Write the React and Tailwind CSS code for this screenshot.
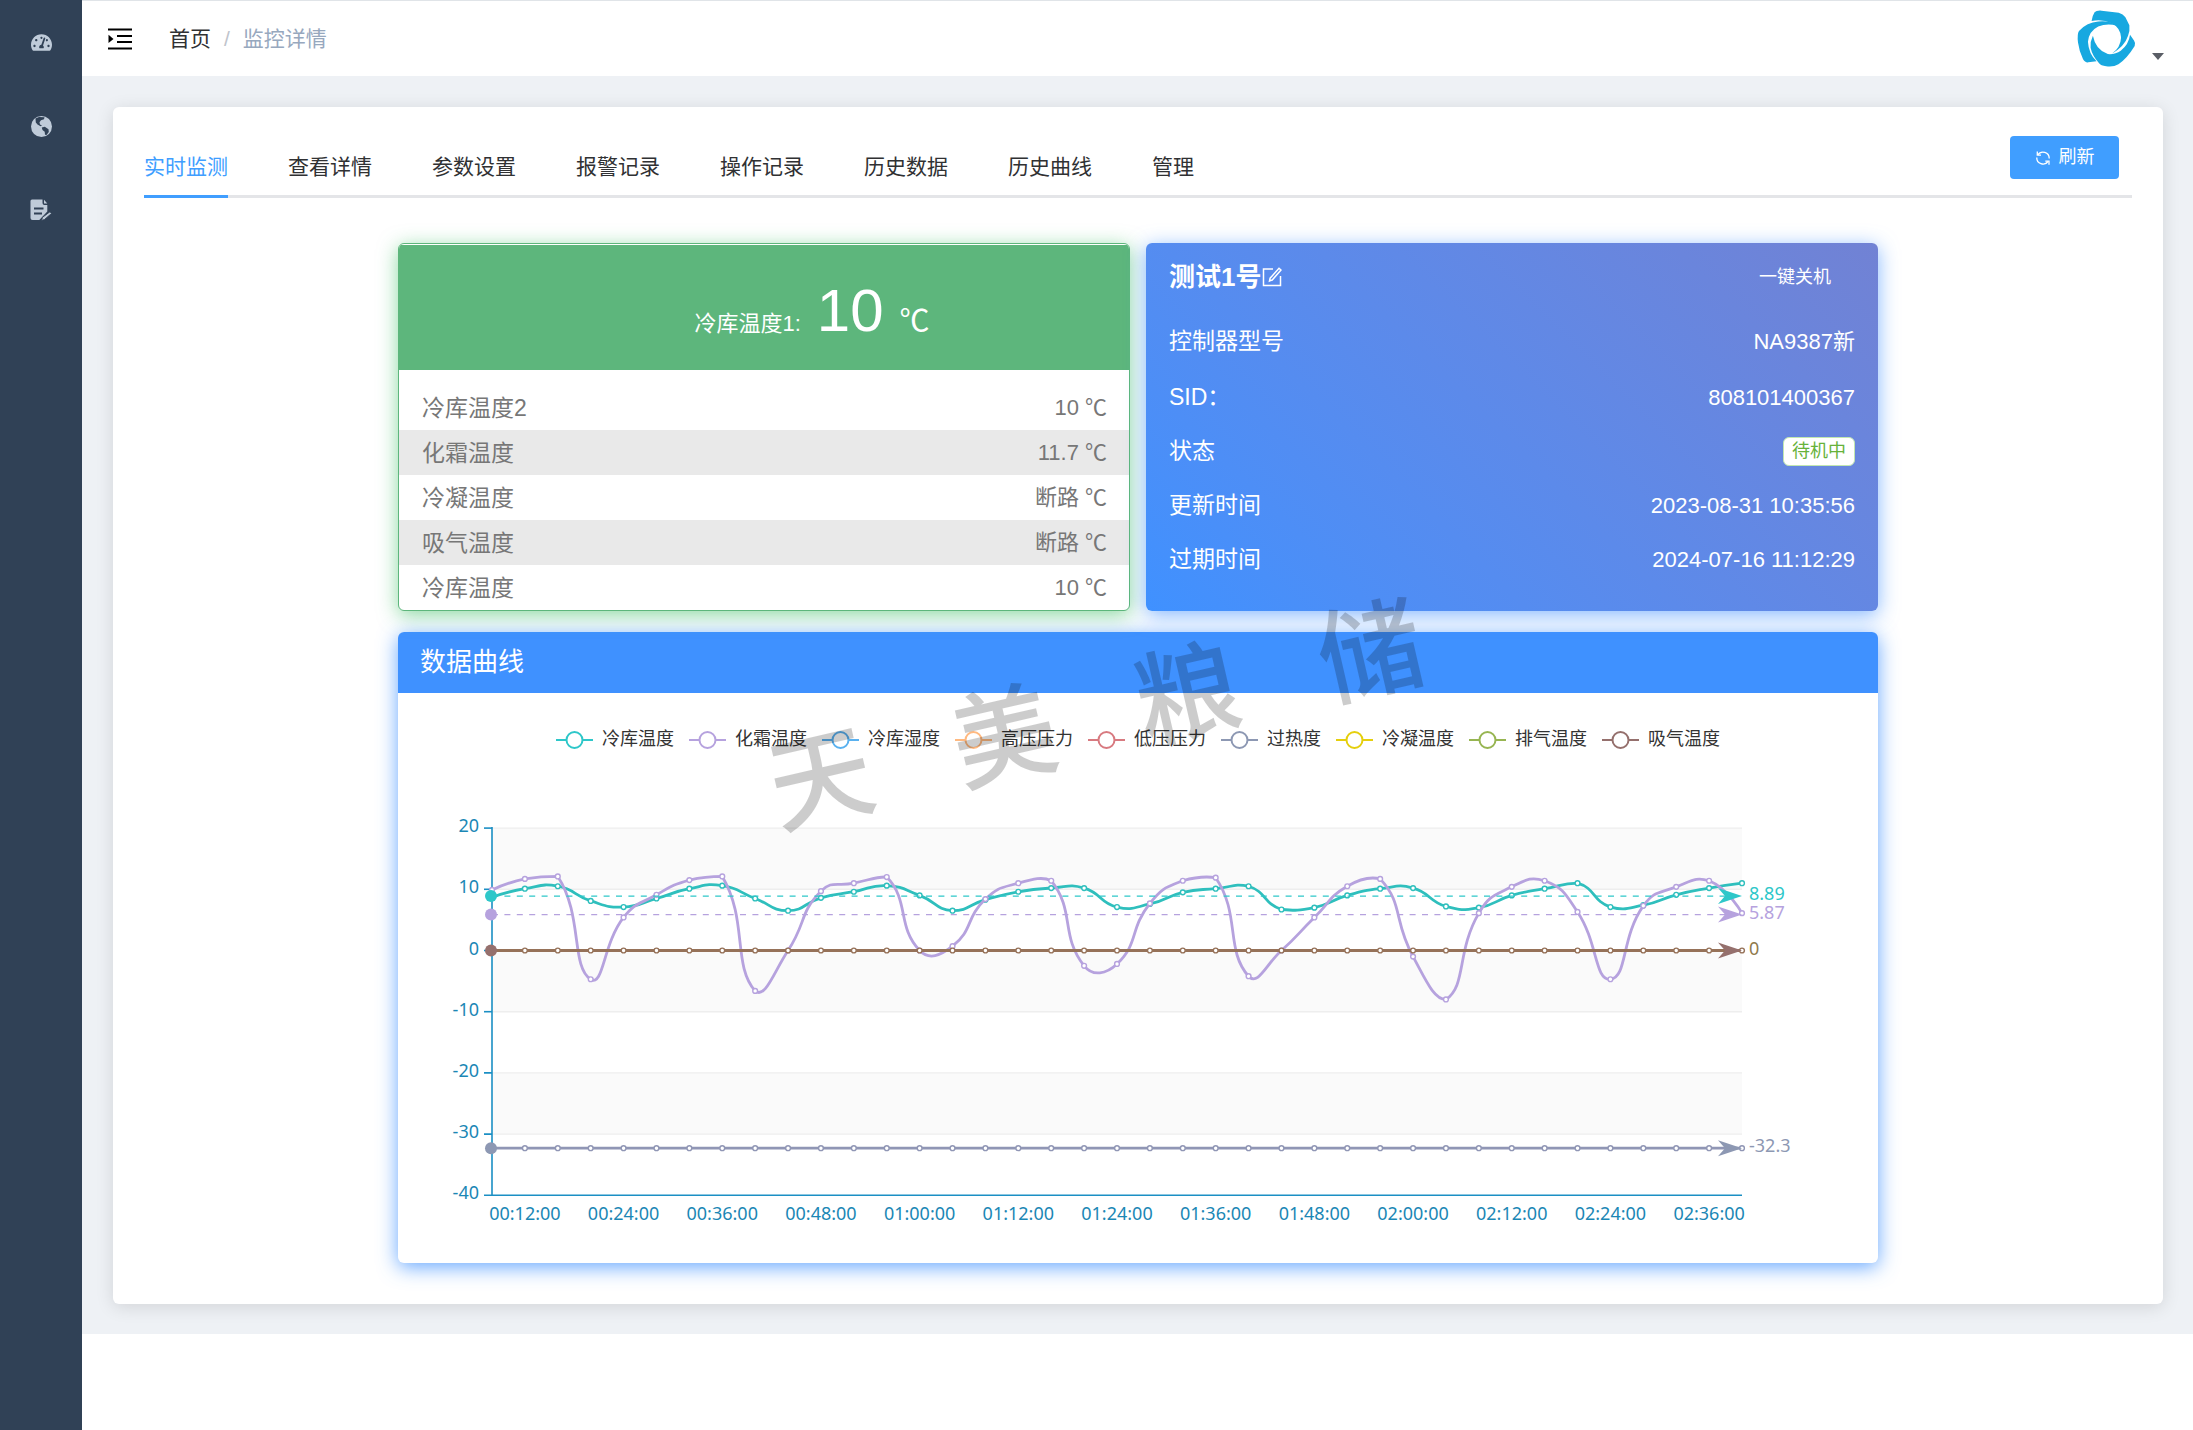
import { FaTachometerAlt } from 'react-icons/fa';

const tabs = ['实时监测', '查看详情', '参数设置', '报警记录', '操作记录', '历史数据', '历史曲线', '管理'];

const temperatures = [
  { name: '冷库温度2', value: '10 ℃' },
  { name: '化霜温度', value: '11.7 ℃' },
  { name: '冷凝温度', value: '断路 ℃' },
  { name: '吸气温度', value: '断路 ℃' },
  { name: '冷库温度', value: '10 ℃' },
];

const legend = [
  { name: '冷库温度', color: '#2ec7c9' },
  { name: '化霜温度', color: '#b6a2de' },
  { name: '冷库湿度', color: '#5ab1ef' },
  { name: '高压压力', color: '#ffb980' },
  { name: '低压压力', color: '#d87a80' },
  { name: '过热度', color: '#8d98b3' },
  { name: '冷凝温度', color: '#e5cf0d' },
  { name: '排气温度', color: '#97b552' },
  { name: '吸气温度', color: '#95706d' },
];

const roomTemp = [
  8.7, 10.1, 10.5, 8.1, 7.1, 8.5, 10.1, 10.6, 8.5, 6.5, 8.6, 9.6, 10.6, 9, 6.5, 8.3, 9.6, 10.2, 10.2, 7.1,
  7.6, 9.5, 10.1, 10.5, 6.7, 7, 9, 10.1, 10.2, 7.2, 7, 9, 10.1, 11, 7.1, 7.4, 9.1, 10.2, 11,
];
const frostTemp = [
  9.9, 11.7, 12.1, -4.7, 5.4, 9.1, 11.5, 12.1, -6.6, 0, 9.7, 11, 12, 0, 0.7, 8.4, 11, 11.4, -2.5, -2.2,
  7.7, 11.4, 11.9, -4.2, 0, 5.4, 10.5, 11.7, -1, -8, 6.1, 10.4, 11.4, 6.3, -4.7, 7.3, 10.4, 11.4, 6.1,
];

const LEFT = 94;
const RIGHT = 1344;
const COUNT = 39;
const px = (i) => LEFT + ((RIGHT - LEFT) * i) / (COUNT - 1);
const py = (v) => 197.5 - v * 6.12;

const timeLabels = Array.from({ length: 13 }, (_, i) => {
  const minutes = 12 * (i + 1);
  const hh = String(Math.floor(minutes / 60)).padStart(2, '0');
  const mm = String(minutes % 60).padStart(2, '0');
  return { text: `${hh}:${mm}:00`, x: px(1 + i * 3) };
});

// cubic curve through every point, handles are kept inside the range of the data
function smoothPath(values) {
  const pts = values.map((v, i) => [px(i), py(v)]);
  const ys = pts.map((p) => p[1]);
  const top = Math.min(...ys);
  const bottom = Math.max(...ys);
  const clamp = (y) => Math.min(bottom, Math.max(top, y));
  let d = `M${pts[0][0]},${pts[0][1]}`;
  let out = pts[0];
  for (let i = 1; i < pts.length; i++) {
    const p = pts[i];
    const prev = pts[i - 1];
    const next = pts[i + 1];
    let inn = p;
    let nextOut = p;
    if (next) {
      const a = Math.hypot(p[0] - prev[0], p[1] - prev[1]);
      const b = Math.hypot(next[0] - p[0], next[1] - p[1]);
      const r = b / (a + b);
      const vx = (next[0] - prev[0]) * 0.5;
      const vy = (next[1] - prev[1]) * 0.5;
      inn = [p[0] - vx * (1 - r), clamp(p[1] - vy * (1 - r))];
      nextOut = [p[0] + vx * r, clamp(p[1] + vy * r)];
    }
    d += `C${out[0]},${out[1]} ${inn[0]},${inn[1]} ${p[0]},${p[1]}`;
    out = nextOut;
  }
  return d;
}

const GlobeIcon = () => (
  <svg viewBox="0 0 21 21" className="size-[21px]" aria-hidden="true">
    <circle cx="10.5" cy="10.5" r="10.5" fill="#bfcbd9" />
    <path d="M4.5 2.5 8 1l5.500 .3-.5 2-3 1-1.500 2 .5 2.200 2 1-1.500 .8L6.500 8.500 4.800 6.500z" fill="#304156" />
    <path d="M10.800 11.500l3-.8 3.700 2.600.3 2.700-2.300 3-1.500-.3-.3-3-2.200-1.700z" fill="#304156" />
  </svg>
);

const FileEditIcon = () => (
  <svg viewBox="0 0 22 22" className="size-[22px]" aria-hidden="true">
    <path
      d="M2 .5h10.500V4a2 2 0 0 0 2 2h2.800v6.500l-8 8.500H2.500a2 2 0 0 1-2-2V2A1.500 1.500 0 0 1 2 .5zM14 .8l3.300 3.700H14z"
      fill="#bfcbd9"
    />
    <path d="M4 9.500h9.500M4 14.500h8" stroke="#304156" strokeWidth="1.8" />
    <path d="M11.500 21.500l1-3.200 7.500-5.600 1.500 1.800-7 6z" fill="#bfcbd9" stroke="#304156" strokeWidth=".9" />
  </svg>
);

const FoldIcon = () => (
  <svg viewBox="0 0 24 22" className="h-[22px] w-6" aria-hidden="true">
    <path d="M0 1.500h24M9 8h15M9 14h15M0 20.500h24" stroke="#000" strokeWidth="2" />
    <path d="M.5 6.800 5.500 11 .5 15z" fill="#000" />
  </svg>
);

const Logo = () => (
  <svg viewBox="382 28 178 176" className="size-[59px]" aria-hidden="true">
    <g fill="#17a8e0">
      <path d="M426 63Q429 46 435 37Q440 31 456 32L508 38Q521 41 528 52L540 76Q542 92 536 108Q526 140 487 162Q514 143 515 113Q513 83 486 70Q460 57 426 63Z" />
      <path d="M502 77Q480 61 446 65Q412 68 388 93Q382 102 385 128Q389 156 400 178Q406 189 416 188L441 185Q417 162 415 126Q418 94 446 80Q472 69 502 77Z" />
      <path d="M430 108Q421 126 423 144Q428 168 448 190Q454 198 470 200Q492 203 507 194Q532 178 556 139Q560 131 554 122L542 105Q538 135 514 153Q497 165 475 163Q438 151 430 108Z" />
    </g>
  </svg>
);

const RefreshIcon = () => (
  <svg viewBox="0 0 16 16" className="size-4" fill="none" stroke="#fff" strokeWidth="1.3" aria-hidden="true">
    <path d="M2.800 5A6.200 6.200 0 0 1 14.200 8.500M1.800 7.500A6.200 6.200 0 0 0 13 11.500" />
    <path d="M2.300 1.500V5.200H6M14 14.800V11.200H10.300" />
  </svg>
);

const EditIcon = () => (
  <svg viewBox="0 0 20 20" className="size-5" fill="none" stroke="#fff" strokeWidth="1.5" aria-hidden="true">
    <path d="M11 2H1.500v16.500h17V9" />
    <path d="M17 1.200l2 1.800-8.800 10-2.700 1 .6-2.800z" />
  </svg>
);

const Average = ({ y, color, label, dashed, labelColor }) => (
  <g>
    {dashed && <path d={`M${LEFT},${y}H${RIGHT - 12}`} stroke={color} strokeWidth="1.4" strokeDasharray="6 6.400" />}
    <circle cx={LEFT - 1} cy={y} r="6" fill={color} />
    <path d={`M${RIGHT - 24},${y - 8}L${RIGHT},${y}L${RIGHT - 24},${y + 8}L${RIGHT - 17},${y}Z`} fill={color} />
    <text x={RIGHT + 7} y={y + 4} fill={labelColor || color}>
      {label}
    </text>
  </g>
);

const Series = ({ values, color }) => (
  <g stroke={color}>
    <path d={smoothPath(values)} fill="none" strokeWidth="2.8" />
    {values.map((v, i) => (
      <circle key={i} cx={px(i)} cy={py(v)} r="2.4" fill="#fff" strokeWidth="1.4" />
    ))}
  </g>
);

const Chart = () => (
  <svg viewBox="0 0 1480 510" className="block w-full font-['Noto_Sans',sans-serif] text-[18px]" role="img" aria-label="数据曲线">
    {[20, 0, -20].map((v) => (
      <rect key={v} x={LEFT} y={py(v)} width={RIGHT - LEFT} height="61" fill="#fafafa" />
    ))}
    {[20, 10, -10, -20, -30].map((v) => (
      <path key={v} d={`M${LEFT},${py(v)}H${RIGHT}`} stroke="#eee" strokeWidth="1.4" />
    ))}
    <g stroke="#1b8fc4" strokeWidth="1.6">
      <path d={`M${LEFT},${py(20) - 1}V${py(-40)}H${RIGHT}`} fill="none" />
      {[20, 10, 0, -10, -20, -30, -40].map((v) => (
        <path key={v} d={`M${LEFT - 8},${py(v)}H${LEFT}`} />
      ))}
    </g>
    <g fill="#1b87b5" textAnchor="end">
      {[20, 10, 0, -10, -20, -30, -40].map((v) => (
        <text key={v} x={LEFT - 13} y={py(v) + 4}>
          {v}
        </text>
      ))}
    </g>
    <g fill="#1b87b5" textAnchor="middle">
      {timeLabels.map((t) => (
        <text key={t.text} x={t.x} y="467">
          {t.text}
        </text>
      ))}
    </g>
    <Series values={roomTemp} color="#2fbfbd" />
    <Series values={frostTemp} color="#b6a2de" />
    <Series values={Array(COUNT).fill(0)} color="#967259" />
    <Series values={Array(COUNT).fill(-32.3)} color="#9096b5" />
    <Average y={py(8.89)} color="#2ec7c9" label="8.89" dashed />
    <Average y={py(5.87)} color="#b6a2de" label="5.87" dashed />
    <Average y={py(0)} color="#95706d" label="0" labelColor="#8f7a4c" />
    <Average y={py(-32.3)} color="#8d98b3" label="-32.3" />
  </svg>
);

const InfoRow = ({ label, children }) => (
  <div className="flex h-[54px] items-center justify-between first:h-[58px]">
    <dt className="text-[23px]">{label}</dt>
    <dd className="text-[22px]">{children}</dd>
  </div>
);

const App = () => {
  return (
    <div className="flex min-h-screen bg-white font-['Liberation_Sans','Noto_Sans_CJK_SC',sans-serif] text-[#303133]">
      <aside className="w-[82px] shrink-0 bg-[#304156]">
        <nav className="flex flex-col items-center text-[#bfcbd9]">
          <a href="#dashboard" aria-label="首页" className="flex h-[84px] w-full items-center justify-center">
            <FaTachometerAlt className="h-[19px] w-[21px]" />
          </a>
          <a href="#map" aria-label="地图" className="flex h-[84px] w-full items-center justify-center">
            <GlobeIcon />
          </a>
          <a href="#records" aria-label="记录" className="flex h-[84px] w-full items-center justify-center">
            <FileEditIcon />
          </a>
        </nav>
      </aside>

      <main className="min-w-0 flex-1">
        <header className="flex h-[76px] items-center border-t border-[#e0e4e8] bg-white pl-[26px] pr-[29px]">
          <button type="button" aria-label="展开菜单">
            <FoldIcon />
          </button>
          <nav className="ml-[37px] flex gap-[13px] text-[21px] leading-8">
            <a href="#home">首页</a>
            <span className="text-[#c0c4cc]">/</span>
            <span className="text-[#97a8be]">监控详情</span>
          </nav>
          <button type="button" aria-label="用户菜单" className="ml-auto flex items-end gap-4">
            <Logo />
            <span className="mb-2 border-x-6 border-t-7 border-x-transparent border-t-[#5a5e66]" />
          </button>
        </header>

        <div className="bg-[#eef1f5] pb-[30px] pl-[31px] pr-[30px] pt-[31px]">
          <section className="rounded-md bg-white px-[31px] pb-[41px] pt-[29px] shadow-[0_3px_18px_rgba(0,0,0,0.12)]">
            <div className="flex h-[62px] items-start border-b-3 border-[#e4e5e8]">
              <div className="flex gap-[60px]" role="tablist">
                {tabs.map((tab, i) => (
                  <button
                    key={tab}
                    type="button"
                    role="tab"
                    aria-selected={i === 0}
                    className={
                      i === 0
                        ? 'h-[62px] border-b-3 border-[#409eff] pt-[3px] text-[21px] text-[#409eff]'
                        : 'h-[62px] border-b-3 border-transparent pt-[3px] text-[21px]'
                    }
                  >
                    {tab}
                  </button>
                ))}
              </div>
              <button
                type="button"
                className="ml-auto mr-[13px] flex h-[43px] w-[109px] items-center justify-center gap-2 rounded bg-[#409eff] text-[18px] text-white"
              >
                <RefreshIcon />
                刷新
              </button>
            </div>

            <div className="relative mx-auto mt-[45px] w-full max-w-[1480px]">
              <div className="grid grid-cols-2 gap-4">
                <div className="overflow-hidden rounded-md border border-[#5db67c] bg-white pt-px shadow-[0_4px_20px_rgba(76,195,110,0.65)]">
                  <div className="flex h-[125px] items-baseline justify-center bg-[#5db67c] pl-24 pt-9 text-[22px] text-white">
                    <span>冷库温度1:</span>
                    <span className="mx-4 text-[60px] leading-none">10</span>
                    <span className="text-[30px]">℃</span>
                  </div>
                  <table className="mt-[15px] w-full text-[22px] text-[#777]">
                    <tbody>
                      {temperatures.map((t) => (
                        <tr key={t.name} className="h-[45px] even:bg-[#e9e9e9]">
                          <th scope="row" className="pl-[23px] text-left text-[23px] font-normal leading-8">{t.name}</th>
                          <td className="pr-[22px] text-right">{t.value}</td>
                        </tr>
                      ))}
                    </tbody>
                  </table>
                </div>

                <div className="rounded-md bg-linear-45 from-[#3f91ff] to-[#7182d4] px-[23px] pt-[7px] text-white shadow-[0_4px_20px_rgba(64,145,255,0.65)]">
                  <div className="flex h-[54px] items-center justify-between">
                    <h2 className="flex items-center gap-px text-[26px] font-bold">
                      测试1号
                      <button type="button" aria-label="编辑">
                        <EditIcon />
                      </button>
                    </h2>
                    <button type="button" className="mr-6 text-[18px]">一键关机</button>
                  </div>
                  <dl className="mt-2">
                    <InfoRow label="控制器型号">NA9387新</InfoRow>
                    <InfoRow label="SID：">808101400367</InfoRow>
                    <InfoRow label="状态">
                      <span className="flex h-[29px] items-center rounded-md border border-[#c2e7b0] bg-white px-2 text-[18px] text-[#67b23a]">
                        待机中
                      </span>
                    </InfoRow>
                    <InfoRow label="更新时间">2023-08-31 10:35:56</InfoRow>
                    <InfoRow label="过期时间">2024-07-16 11:12:29</InfoRow>
                  </dl>
                </div>
              </div>

              <div className="mt-[21px] overflow-hidden rounded-md bg-white shadow-[0_4px_20px_rgba(64,145,255,0.8)]">
                <h2 className="flex h-[61px] items-center bg-[#3f91ff] px-[22px] text-[26px] text-white">数据曲线</h2>
                <div className="flex h-[60px] items-end justify-center gap-[15px] text-[18px] text-[#333]">
                  {legend.map((item) => (
                    <button key={item.name} type="button" className="flex items-center gap-[9px]">
                      <svg viewBox="0 0 37 20" className="h-5 w-[37px]" aria-hidden="true">
                        <path d="M0 10H37" stroke={item.color} strokeWidth="2" />
                        <circle cx="18.500" cy="10" r="8" fill="#fff" stroke={item.color} strokeWidth="2" />
                      </svg>
                      {item.name}
                    </button>
                  ))}
                </div>
                <Chart />
              </div>

              {/* watermark floats over the panels */}
              <div className="pointer-events-none absolute left-[364px] top-[422px] flex -rotate-[13deg] select-none gap-[84px] text-[104px] font-medium leading-none text-black/20">
                <span>天</span>
                <span>美</span>
                <span>粮</span>
                <span>储</span>
              </div>
            </div>
          </section>
        </div>
      </main>
    </div>
  );
};

export default App;
